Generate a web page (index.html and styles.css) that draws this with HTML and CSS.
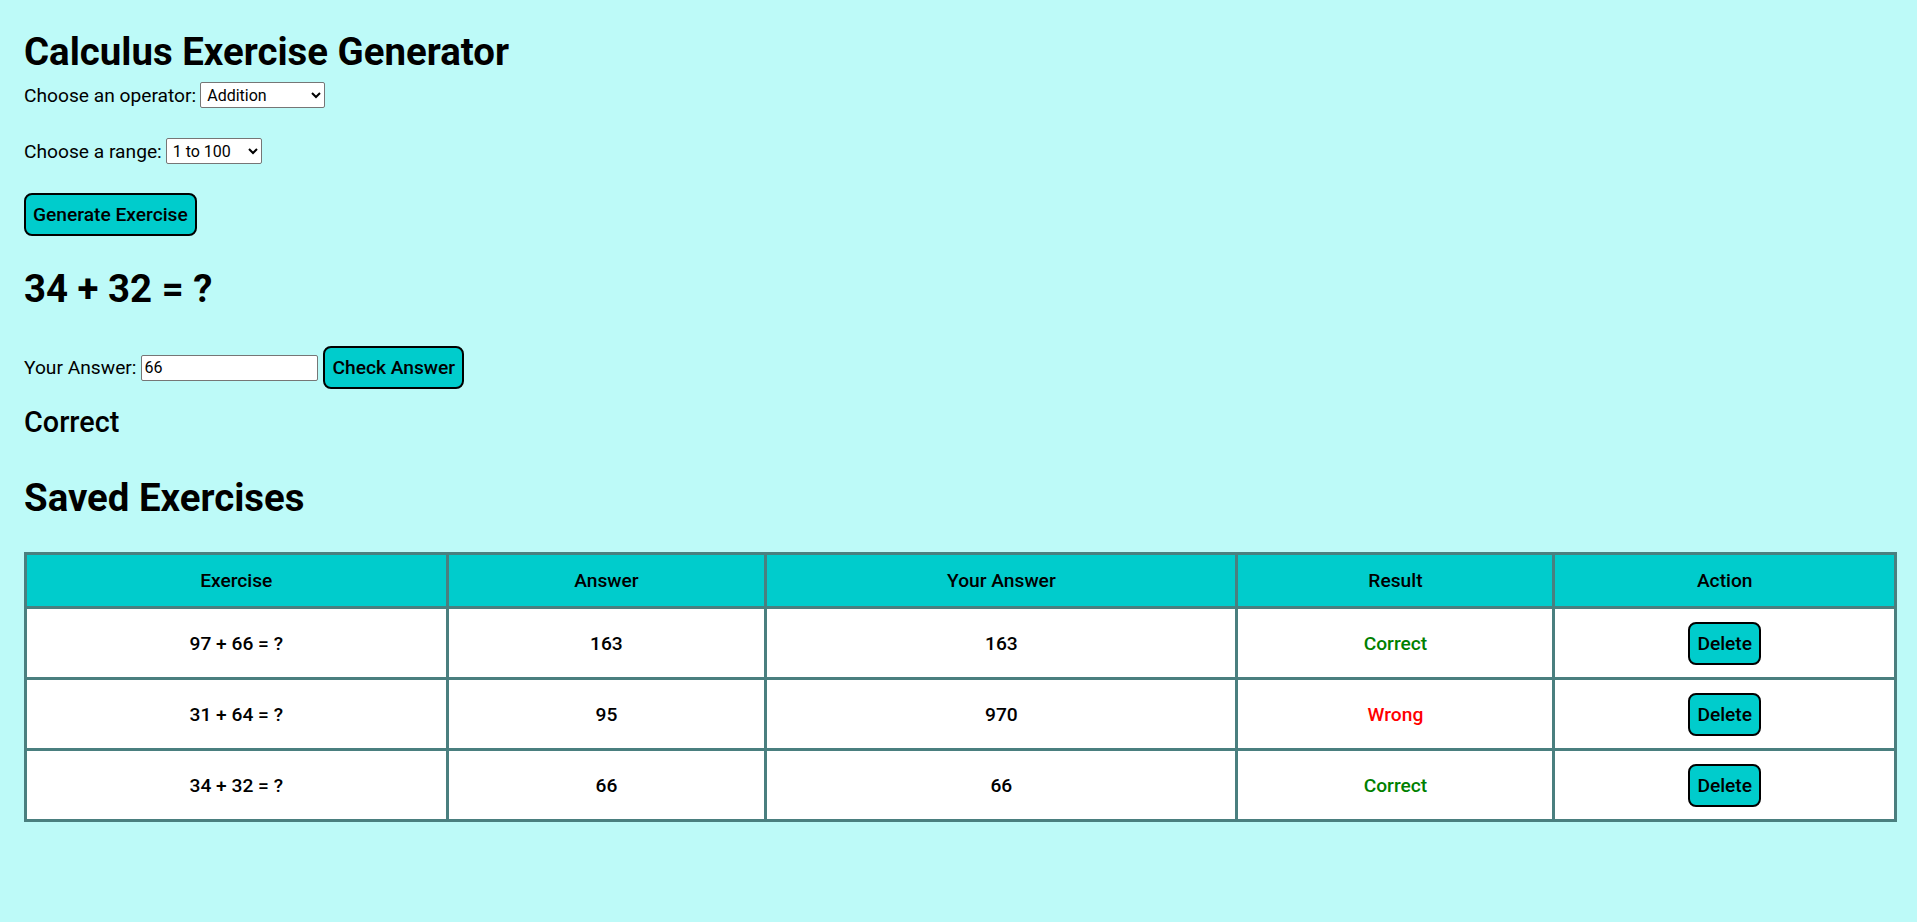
FILE: index.html
```html
<!DOCTYPE html>
<html lang="en">
<head>
<meta charset="utf-8">
<title>Calculus Exercise Generator</title>
<link rel="stylesheet" href="styles.css">
</head>
<body>
<h1 class="title">Calculus Exercise Generator</h1>
<div class="field field-op">
  <label class="label" for="op">Choose an operator:</label>
  <select id="op" class="sel sel-op">
    <option>Addition</option>
    <option>Subtraction</option>
    <option>Multiplication</option>
    <option>Division</option>
  </select>
</div>
<div class="field field-range">
  <label class="label" for="range">Choose a range:</label>
  <select id="range" class="sel sel-range">
    <option>1 to 100</option>
    <option>1 to 10</option>
    <option>1 to 1000</option>
  </select>
</div>
<button class="btn btn-gen">Generate Exercise</button>
<h2 class="exercise">34 + 32 = ?</h2>
<div class="answer-row">
  <label class="label" for="ans">Your Answer:</label>
  <input id="ans" class="answer-input" type="text" value="66">
  <button class="btn">Check Answer</button>
</div>
<h3 class="feedback">Correct</h3>
<h2 class="saved-title">Saved Exercises</h2>
<table class="saved">
  <thead>
    <tr>
      <th class="c-ex">Exercise</th>
      <th class="c-ans">Answer</th>
      <th class="c-your">Your Answer</th>
      <th class="c-res">Result</th>
      <th class="c-act">Action</th>
    </tr>
  </thead>
  <tbody>
    <tr>
      <td>97 + 66 = ?</td>
      <td>163</td>
      <td>163</td>
      <td class="ok">Correct</td>
      <td><button class="btn">Delete</button></td>
    </tr>
    <tr>
      <td>31 + 64 = ?</td>
      <td>95</td>
      <td>970</td>
      <td class="bad">Wrong</td>
      <td><button class="btn">Delete</button></td>
    </tr>
    <tr>
      <td>34 + 32 = ?</td>
      <td>66</td>
      <td>66</td>
      <td class="ok">Correct</td>
      <td><button class="btn">Delete</button></td>
    </tr>
  </tbody>
</table>
</body>
</html>
```

FILE: styles.css
```css
html {
  background: #bdfaf8;
}
body {
  margin: 0;
  padding: 0 20px 0 24px;
  background: #bdfaf8;
  color: #000;
  font-family: Roboto, "Liberation Sans", Arial, sans-serif;
  font-size: 19.2px;
}
.title {
  margin: 29px 0 0;
  font-size: 38.4px;
  line-height: 45px;
  font-weight: 700;
}
.field {
  display: flex;
  align-items: center;
  gap: 4px;
  height: 26px;
}
.field-op {
  margin-top: 8px;
}
.field-range {
  margin-top: 30px;
}
.label {
  font-size: 19.2px;
  line-height: 23px;
}
.sel {
  height: 26px;
  font-family: Roboto, "Liberation Sans", Arial, sans-serif;
  font-size: 16px;
  color: #000;
  background: #fff;
  border: 1px solid #767676;
  border-radius: 2px;
  padding: 0 2px;
}
.sel-op {
  width: 125px;
}
.sel-range {
  width: 96px;
}
.btn {
  font-family: Roboto, "Liberation Sans", Arial, sans-serif;
  font-size: 19.2px;
  font-weight: 500;
  line-height: 23px;
  color: #000;
  background: #00cccc;
  border: 2px solid #000;
  border-radius: 8px;
  padding: 8px 7px;
  cursor: pointer;
}
.btn-gen {
  display: block;
  margin-top: 29px;
}
.exercise {
  margin: 30px 0 0;
  font-size: 38.4px;
  line-height: 45px;
  font-weight: 700;
}
.answer-row {
  display: flex;
  align-items: center;
  margin-top: 35px;
}
.answer-input {
  width: 177px;
  height: 26px;
  box-sizing: border-box;
  margin: 0 5px 0 5px;
  padding: 0 2px;
  font-family: Roboto, "Liberation Sans", Arial, sans-serif;
  font-size: 16px;
  border: 1px solid #767676;
  border-radius: 2px;
  background: #fff;
}
.feedback {
  margin: 15.5px 0 0;
  font-size: 28.8px;
  line-height: 34px;
  font-weight: 500;
}
.saved-title {
  margin: 36.5px 0 0;
  font-size: 38.4px;
  line-height: 45px;
  font-weight: 700;
}
.saved {
  margin-top: 32px;
  width: 100%;
  table-layout: fixed;
  border-collapse: collapse;
  border: 3px solid #4a7f7f;
  font-size: 19.2px;
  font-weight: 500;
}
.saved th,
.saved td {
  border: 3px solid #4a7f7f;
  text-align: center;
  line-height: 23px;
}
.saved th {
  background: #00cccc;
  font-weight: 500;
  padding: 14px 10px;
}
.saved td {
  background: #fff;
  padding: 12.5px 10px;
}
.c-ex { width: 22.7%; }
.c-ans { width: 16.86%; }
.c-your { width: 25.52%; }
.c-res { width: 16.76%; }
.c-act { width: 18.16%; }
.ok {
  color: #008000;
}
.bad {
  color: #ff0000;
}
```
